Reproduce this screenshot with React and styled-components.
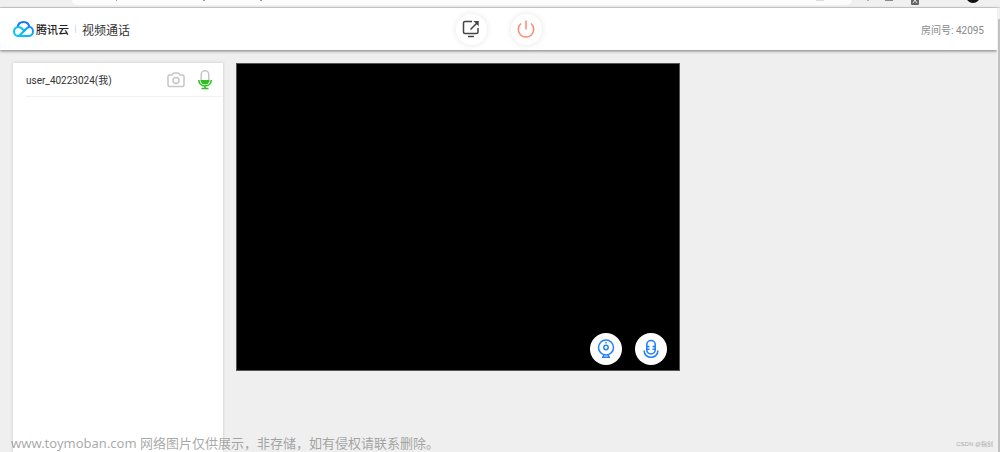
import styled, { createGlobalStyle } from 'styled-components';

const GlobalStyle = createGlobalStyle`
  * {
    box-sizing: border-box;
  }

  body {
    margin: 0;
    overflow: hidden;
    background: #efefef;
    color: #333;
    font-family: Roboto, "Noto Sans CJK SC", sans-serif;
  }
`;

const Page = styled.div`
  display: flex;
  flex-direction: column;
  height: 100vh;
`;

const BrowserBar = styled.div`
  display: flex;
  flex: none;
  justify-content: space-between;
  height: 8px;
  padding-left: 72px;
  background: #f0f0f0;
  border-bottom: 1px solid #d3d3d3;
`;

const AddressBox = styled.div`
  display: flex;
  justify-content: space-between;
  width: 84%;
  height: 5px;
  padding: 0 28px 0 44px;
  background: #fcfcfc;
  border-radius: 0 0 8px 8px;
`;

const AddressMarks = styled.svg`
  display: block;
  width: 150px;
  height: 2px;
`;

const BarIcons = styled.svg`
  display: block;
  width: 140px;
  height: 7px;
  overflow: visible;
`;

const Screen = styled.div`
  display: flex;
  flex: 1;
  min-height: 0;
`;

const Main = styled.div`
  display: flex;
  flex: 1;
  flex-direction: column;
  min-width: 0;
`;

const Scrollbar = styled.div`
  width: 3px;
  padding: 11px 0 0 1px;
  background: #f1f1f1;

  &::before {
    content: "";
    display: block;
    height: 100%;
    background: #c1c1c1;
  }
`;

const Header = styled.header`
  display: grid;
  flex: none;
  grid-template-columns: 1fr auto 1fr;
  align-items: center;
  height: 42px;
  padding: 0 13px;
  background: #fff;
  box-shadow: 0 1px 3px rgba(0, 0, 0, 0.5);
`;

const Brand = styled.div`
  display: flex;
  align-items: center;
`;

const BrandName = styled.span`
  margin-left: 2px;
  color: #222;
  font-size: 11px;
  font-weight: 500;
`;

const Divider = styled.span`
  width: 1px;
  height: 8px;
  margin: 0 6px;
  background: #ddd;
`;

const Title = styled.h1`
  margin: 0;
  font-size: 12px;
  font-weight: 400;
`;

const Actions = styled.div`
  display: flex;
  gap: 24px;
`;

const RoundButton = styled.button`
  display: flex;
  align-items: center;
  justify-content: center;
  width: ${(props) => props.$size}px;
  height: ${(props) => props.$size}px;
  padding: 0;
  background: #fff;
  border: 0;
  border-radius: 50%;
  box-shadow: ${(props) => (props.$raised ? '0 0 6px rgba(0, 0, 0, 0.1)' : 'none')};
  color: ${(props) => props.$color};
  cursor: pointer;
`;

const Room = styled.span`
  justify-self: end;
  color: #888;
  font-size: 10px;
`;

const Content = styled.main`
  display: flex;
  flex: 1;
  align-items: flex-start;
  gap: 13px;
  min-height: 0;
  padding: 13px 13px 0;
`;

const MemberList = styled.ul`
  flex: none;
  align-self: stretch;
  width: 210px;
  margin: 0;
  padding: 0 0 0 13px;
  background: #fff;
  box-shadow: 0 0 3px rgba(0, 0, 0, 0.18);
  list-style: none;
`;

const Member = styled.li`
  display: flex;
  align-items: center;
  height: 34px;
  padding-right: 11px;
  border-bottom: 1px solid #f2f2f2;
`;

const MemberName = styled.span`
  flex: 1;
  font-size: 10px;
`;

const MemberIcons = styled.span`
  display: flex;
  align-items: center;
  gap: 13px;
`;

const Video = styled.section`
  display: flex;
  flex: 1;
  align-items: flex-end;
  justify-content: flex-end;
  gap: 13px;
  max-width: 444px;
  aspect-ratio: 444 / 308;
  padding: 5px 12px;
  background: #000;
  border: 1px solid #555;
`;

const Watermark = styled.p`
  position: absolute;
  bottom: 0;
  left: 11px;
  margin: 0;
  color: rgba(110, 110, 110, 0.6);
  font-family: "Noto Sans", "Noto Sans CJK SC", sans-serif;
  font-size: 13px;
  line-height: 18px;
  white-space: nowrap;
`;

const Credit = styled.p`
  position: absolute;
  right: 7px;
  bottom: 3px;
  margin: 0;
  color: #aaa;
  font-family: "Liberation Sans", "Noto Sans CJK SC", sans-serif;
  font-size: 6px;
  line-height: 10px;
`;

function CloudLogo() {
  return (
    <svg width="21" height="16" viewBox="0 0 42 32" fill="none" strokeWidth="4" aria-hidden="true">
      <defs>
        <linearGradient id="cloud" x1="0" y1="1" x2="1" y2="0">
          <stop offset="0" stopColor="#00cdf5" />
          <stop offset="1" stopColor="#168bff" />
        </linearGradient>
      </defs>
      <path d="M9 13C10 5 16 2 21 2c6 0 11 4 12 11" stroke="#1677ff" />
      <path d="M24 21C19 16 16 12 11 12c-5 0-9 4-9 9 0 5 4 9 9 9h4" stroke="#00c8ef" />
      <path d="M12 30L26 16c3-3 5-4 7-4 4 0 7 4 7 9s-4 9-9 9H12" stroke="url(#cloud)" />
    </svg>
  );
}

function ShareIcon() {
  return (
    <svg width="18" height="18" viewBox="0 0 18 18" fill="none" stroke="currentColor" strokeWidth="1.5" aria-hidden="true">
      <path d="M10 1.500H3Q1.500 1.500 1.500 3V12Q1.500 13.500 3 13.500H14.500Q16 13.500 16 12V8" />
      <path d="M8.500 9.500L15.500 2.500M6 16.500H12" />
      <path d="M11.500 1H16.700V6.200Z" fill="currentColor" stroke="none" />
    </svg>
  );
}

function PowerIcon() {
  return (
    <svg width="18" height="18" viewBox="0 0 18 18" fill="none" stroke="currentColor" strokeWidth="1.5" aria-hidden="true">
      <path d="M9 .5V9.500M4 3.500A7.700 7.700 0 1 0 14 3.500" />
    </svg>
  );
}

function CameraIcon() {
  return (
    <svg width="18" height="16" viewBox="0 0 18 16" fill="none" stroke="#c6c6c6" strokeWidth="1.5" aria-hidden="true">
      <path d="M2.500 3H5L6 1.500Q6.300 1 7 1H11Q11.700 1 12 1.500L13 3H15.500Q17 3 17 4.500V13Q17 14.500 15.500 14.500H2.500Q1 14.500 1 13V4.500Q1 3 2.500 3Z" />
      <circle cx="9" cy="8.500" r="3" />
    </svg>
  );
}

function MicLevelIcon() {
  return (
    <svg width="14" height="20" viewBox="0 0 14 20" fill="none" aria-hidden="true">
      <path d="M3.200 10V4.500a3.800 3.800 0 0 1 7.600 0V10" stroke="#c6c6c6" strokeWidth="1.500" />
      <path d="M2.500 10h9v.5a4.500 4 0 0 1-9 0Z" fill="#2fbf22" />
      <path d="M.8 10c0 8 12.400 8 12.400 0M7 16v2.500M3.500 18.500h7" stroke="#2fbf22" strokeWidth="1.600" />
    </svg>
  );
}

function WebcamIcon() {
  return (
    <svg width="18" height="20" viewBox="0 0 18 20" fill="none" stroke="currentColor" strokeWidth="1.500" aria-hidden="true">
      <circle cx="9" cy="8.500" r="7.500" />
      <circle cx="9" cy="8.500" r="2.200" />
      <path d="M9 3V4.500M7 16L6 18M11 16L12 18M5 18.200H13" />
    </svg>
  );
}

function MicIcon() {
  return (
    <svg width="16" height="20" viewBox="0 0 16 20" fill="none" stroke="currentColor" strokeWidth="1.600" aria-hidden="true">
      <rect x="3.800" y="1.500" width="8.400" height="13.500" rx="4.200" />
      <path d="M4 7.500H6.500M9.500 7.500H12M4 10.200H6.500M9.500 10.200H12M1.100 11.500c0 9 13.800 9 13.800 0" />
    </svg>
  );
}

function App() {
  return (
    <Page>
      <GlobalStyle />
      <BrowserBar>
        <AddressBox>
          <AddressMarks viewBox="0 0 150 2" fill="#999">
            <path d="M0 0h1v1h-1zM87 0h2v1h-2zM144 0h2v1h-2z" />
          </AddressMarks>
          <AddressMarks viewBox="0 0 150 2" fill="#ddd">
            <path d="M142 0h8v1h-8z" />
          </AddressMarks>
        </AddressBox>
        <BarIcons viewBox="0 0 140 7">
          <path d="M7 0h2v1h-2z" fill="#8bca8b" />
          <path d="M25 0h8v1h-8z" fill="#888" />
          <rect x="51" y="-3" width="8" height="8" rx="1" fill="#666" />
          <path d="M53 3l2-3 2 3" fill="none" stroke="#eee" />
          <circle cx="113" cy="-4" r="7" fill="#111" />
        </BarIcons>
      </BrowserBar>
      <Screen>
        <Main>
          <Header>
            <Brand>
              <CloudLogo />
              <BrandName>腾讯云</BrandName>
              <Divider />
              <Title>视频通话</Title>
            </Brand>
            <Actions>
              <RoundButton $size={31} $raised $color="#444" aria-label="分享屏幕">
                <ShareIcon />
              </RoundButton>
              <RoundButton $size={31} $raised $color="#ff8870" aria-label="退出">
                <PowerIcon />
              </RoundButton>
            </Actions>
            <Room>房间号: 42095</Room>
          </Header>
          <Content>
            <MemberList>
              <Member>
                <MemberName>user_40223024(我)</MemberName>
                <MemberIcons>
                  <CameraIcon />
                  <MicLevelIcon />
                </MemberIcons>
              </Member>
            </MemberList>
            <Video>
              <RoundButton $size={32} $color="#2080ff" aria-label="摄像头">
                <WebcamIcon />
              </RoundButton>
              <RoundButton $size={32} $color="#2080ff" aria-label="麦克风">
                <MicIcon />
              </RoundButton>
            </Video>
          </Content>
        </Main>
        <Scrollbar />
      </Screen>
      <Watermark>www.toymoban.com 网络图片仅供展示，非存储，如有侵权请联系删除。</Watermark>
      <Credit>CSDN @指剑</Credit>
    </Page>
  );
}

export default App;
